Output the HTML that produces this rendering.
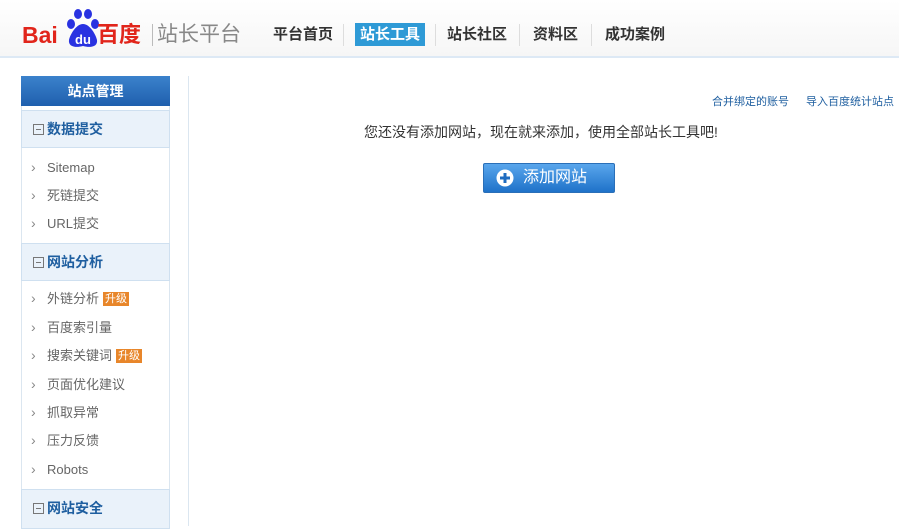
<!DOCTYPE html>
<html><head><meta charset="utf-8"><style>
*{margin:0;padding:0;box-sizing:border-box}
body{width:899px;height:526px;overflow:hidden;background:#fff;font-family:"Liberation Sans","Noto Sans CJK SC",sans-serif;position:relative}
.hdr{position:absolute;left:0;top:0;width:899px;height:58px;background:linear-gradient(#fff,#f6f6f6);border-bottom:2px solid #dde9f5}
.a{position:absolute}
.nav{position:absolute;top:24px;font-size:15px;font-weight:bold;color:#333;line-height:22px}
.sep{position:absolute;top:24px;width:1px;height:22px;background:#ddd}
.side{position:absolute;left:21px;width:149px}
.ttl{top:76px;height:30px;background:linear-gradient(#3b82cc,#1f5fae);color:#fff;font-size:14px;font-weight:bold;text-align:center;line-height:30px}
.sec{position:absolute;left:21px;width:149px;height:38px;background:#eaf2fa;border:1px solid #cfe0f0;color:#1f5fa0;font-size:14px;font-weight:bold;line-height:36px;padding-left:25px}
.sec:before{content:"";position:absolute;left:11px;top:13px;width:9px;height:9px;border:1px solid #777;background:linear-gradient(#777,#777) center/5px 1px no-repeat}
.it{position:absolute;left:47px;font-size:13px;color:#666;line-height:16px}
.it:before{content:"›";position:absolute;left:-16px;top:-1px;color:#888;font-size:14px}
.up{display:inline-block;background:#e8862a;color:#fff;font-size:11px;line-height:14px;padding:0 2px;margin-left:4px;vertical-align:1px}
.box{position:absolute;left:21px;width:149px;border-left:1px solid #dbe6f0;border-right:1px solid #dbe6f0}
</style></head><body>
<div class="hdr"></div>
<div class="a" style="left:22px;top:22px;font:bold 23px 'Liberation Sans',sans-serif;color:#e1251b;line-height:26px">Bai</div>
<svg class="a" style="left:65px;top:7px" width="36" height="42" viewBox="0 0 36 42">
<ellipse cx="6" cy="17" rx="4" ry="5" fill="#2932e1"/><ellipse cx="13" cy="7" rx="4" ry="5" fill="#2932e1"/><ellipse cx="23" cy="7" rx="4" ry="5" fill="#2932e1"/><ellipse cx="30" cy="17" rx="4" ry="5" fill="#2932e1"/>
<path d="M18 17 C11 17 5 28 4 33 C3 40 11 41 18 39 C25 41 33 40 32 33 C31 28 25 17 18 17Z" fill="#2932e1"/>
<text x="18" y="37" fill="#fff" font-size="13" font-weight="bold" text-anchor="middle" font-family="Liberation Sans">du</text></svg>
<div class="a" style="left:97px;top:20px;font-size:22px;font-weight:bold;color:#e1251b;line-height:30px">百度</div>
<div class="a" style="left:152px;top:24px;width:1px;height:22px;background:#bbb"></div>
<div class="a" style="left:157px;top:20px;font-size:21px;color:#888;line-height:30px">站长平台</div>
<div class="nav" style="left:273px">平台首页</div>
<div class="sep" style="left:343px"></div>
<div class="a" style="left:355px;top:23px;width:70px;height:23px;background:#2e9ad6"></div>
<div class="nav" style="left:360px;color:#fff">站长工具</div>
<div class="sep" style="left:435px"></div>
<div class="nav" style="left:447px">站长社区</div>
<div class="sep" style="left:519px"></div>
<div class="nav" style="left:533px">资料区</div>
<div class="sep" style="left:591px"></div>
<div class="nav" style="left:605px">成功案例</div>

<div class="a side ttl">站点管理</div>
<div class="box" style="top:106px;height:420px"></div>
<div class="sec" style="top:110px">数据提交</div>
<div class="it" style="top:160px">Sitemap</div>
<div class="it" style="top:188px">死链提交</div>
<div class="it" style="top:216px">URL提交</div>
<div class="sec" style="top:243px">网站分析</div>
<div class="it" style="top:291px">外链分析<span class="up">升级</span></div>
<div class="it" style="top:320px">百度索引量</div>
<div class="it" style="top:348px">搜索关键词<span class="up">升级</span></div>
<div class="it" style="top:377px">页面优化建议</div>
<div class="it" style="top:405px">抓取异常</div>
<div class="it" style="top:433px">压力反馈</div>
<div class="it" style="top:462px">Robots</div>
<div class="sec" style="top:489px;height:40px">网站安全</div>

<div class="a" style="left:188px;top:76px;width:1px;height:450px;background:#dbe6f0"></div>
<div class="a" style="left:712px;top:93px;font-size:11px;color:#1f5fa0">合并绑定的账号</div>
<div class="a" style="left:806px;top:93px;font-size:11px;color:#1f5fa0">导入百度统计站点</div>
<div class="a" style="left:364px;top:122px;font-size:14px;color:#333">您还没有添加网站，现在就来添加，使用全部站长工具吧!</div>
<div class="a" style="left:483px;top:163px;width:132px;height:30px;background:linear-gradient(#59a6ec,#1f72c9);border:1px solid #2a6fb8;border-radius:2px"></div>
<svg class="a" style="left:496px;top:169px" width="18" height="18"><circle cx="9" cy="9" r="8.5" fill="#fff"/><path d="M9 4v10M4 9h10" stroke="#1f6cc0" stroke-width="3"/></svg>
<div class="a" style="left:523px;top:167px;font-size:16px;color:#fff;line-height:22px">添加网站</div>
</body></html>
